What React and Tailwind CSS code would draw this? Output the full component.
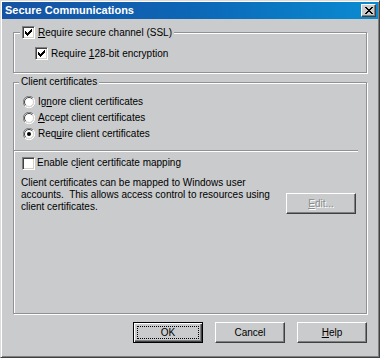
import React from "react";

const FACE = "bg-[#c9cbcc]";

const CheckBox = ({ checked }) => (
    <div className="w-[13px] h-[13px] shrink-0 bg-white border border-t-[#808080] border-l-[#808080] border-r-white border-b-white shadow-[inset_1px_1px_0_#404040,inset_-1px_-1px_0_#d4d0c8] flex items-center justify-center">
        {checked && (
            <svg width="7" height="7" viewBox="0 0 7 7" shapeRendering="crispEdges">
                <path
                    fill="#000"
                    d="M6 0h1v1h-1z M5 1h2v1h-2z M0 2h1v1h-1z M4 2h3v1h-3z M0 3h2v1h-2z M3 3h3v1h-3z M0 4h5v1h-5z M1 5h3v1h-3z M2 6h1v1h-1z"
                />
            </svg>
        )}
    </div>
);

const Radio = ({ checked }) => (
    <svg width="12" height="12" viewBox="0 0 12 12" className="shrink-0">
        <circle cx="6" cy="6" r="5" fill="#fff" />
        <path d="M1.9 10.1 A5.5 5.5 0 0 1 10.1 1.9" fill="none" stroke="#808080" strokeWidth="1" />
        <path d="M2.8 9.2 A4.5 4.5 0 0 1 9.2 2.8" fill="none" stroke="#404040" strokeWidth="1" />
        <path d="M10.1 1.9 A5.5 5.5 0 0 1 1.9 10.1" fill="none" stroke="#fff" strokeWidth="1" />
        <path d="M9.2 2.8 A4.5 4.5 0 0 1 2.8 9.2" fill="none" stroke="#d4d0c8" strokeWidth="1" />
        {checked && <circle cx="6" cy="6" r="2" fill="#000" />}
    </svg>
);

const Button = ({ children, isDefault, disabled }) => {
    if (isDefault) {
        return (
            <div className="w-[70px] h-[21px] border border-black shadow-[inset_1px_1px_0_#fff,inset_-1px_-1px_0_#404040,inset_-2px_-2px_0_#808080] p-[3px]">
                <div className="w-full h-full border border-dotted border-black flex items-center justify-center">
                    {children}
                </div>
            </div>
        );
    }
    return (
        <div
            className={`w-[70px] h-[21px] shrink-0 border border-t-white border-l-white border-r-[#404040] border-b-[#404040] shadow-[inset_-1px_-1px_0_#808080] flex items-center justify-center ${
                disabled ? "text-[#8a8c8e] [text-shadow:1px_1px_0_#fff]" : ""
            }`}
        >
            {children}
        </div>
    );
};

const GroupBox = ({ className, legend, legendClass, children }) => (
    <div className={`relative border border-[#8f9193] shadow-[inset_1px_1px_0_#fff,1px_1px_0_#fff] ${className}`}>
        <div className={`absolute ${FACE} px-[2px] ${legendClass}`}>{legend}</div>
        {children}
    </div>
);

export default function App() {
    return (
        <div className={`w-[380px] h-[358px] ${FACE} border border-t-[#dcdcdc] border-l-[#dcdcdc] border-r-[#404040] border-b-[#404040] shadow-[inset_1px_1px_0_#fff,inset_-1px_-1px_0_#808080] p-[1px] flex flex-col font-['Liberation_Sans',Arial,sans-serif] text-[10px] leading-[12px] text-black select-none`}>
            {/* title bar */}
            <div className="h-[17px] shrink-0 flex items-center bg-linear-to-r from-[#1652a2] via-[#0c66b6] to-[#0a8cd2] pl-[3px] pr-[2px]">
                <span className="flex-1 text-white font-bold text-[11px] leading-[13px]">Secure Communications</span>
                <div className="w-[15px] h-[13px] border border-t-white border-l-white border-r-[#404040] border-b-[#404040] shadow-[inset_-1px_-1px_0_#808080] bg-[#c9cbcc] flex items-center justify-center">
                    <svg width="8" height="7" viewBox="0 0 8 7" shapeRendering="crispEdges">
                        <path
                            fill="#000"
                            d="M0 0h2v1h-2z M6 0h2v1h-2z M1 1h2v1h-2z M5 1h2v1h-2z M2 2h4v1h-4z M3 3h2v1h-2z M2 4h4v1h-4z M1 5h2v1h-2z M5 5h2v1h-2z M0 6h2v1h-2z M6 6h2v1h-2z"
                        />
                    </svg>
                </div>
            </div>

            <div className="mx-[11px] mt-[13px]">
                <GroupBox
                    className="h-[41px]"
                    legendClass="left-[6px] top-[-7px] h-[13px] flex items-center gap-[3px]"
                    legend={
                        <>
                            <CheckBox checked />
                            <span>
                                <u>R</u>equire secure channel (SSL)
                            </span>
                        </>
                    }
                >
                    <div className="pt-[14px] pl-[21px] flex items-center gap-[3px]">
                        <CheckBox checked />
                        <span>
                            Require <u>1</u>28-bit encryption
                        </span>
                    </div>
                </GroupBox>

                <GroupBox
                    className="mt-[9px] h-[232px]"
                    legendClass="left-[5px] top-[-7px]"
                    legend="Client certificates"
                >
                    <div className="pt-[11px] pl-[9px]">
                        <div className="h-[16px] flex items-center gap-[3px]">
                            <Radio />
                            <span>
                                Ig<u>n</u>ore client certificates
                            </span>
                        </div>
                        <div className="h-[16px] flex items-center gap-[3px]">
                            <Radio />
                            <span>
                                <u>A</u>ccept client certificates
                            </span>
                        </div>
                        <div className="h-[16px] flex items-center gap-[3px]">
                            <Radio checked />
                            <span>
                                Req<u>u</u>ire client certificates
                            </span>
                        </div>
                    </div>

                    <div className="mt-[8px] mr-[8px] h-0 border-t border-t-[#8f9193] border-b border-b-white" />

                    <div className="mt-[3px] pl-[8px] h-[16px] flex items-center gap-[2px]">
                        <CheckBox />
                        <span>
                            Enable c<u>l</u>ient certificate mapping
                        </span>
                    </div>

                    <div className="mt-[6px] pl-[7px] pr-[10px] flex justify-between items-start">
                        <div className="whitespace-pre leading-[12px]">
                            {"Client certificates can be mapped to Windows user\naccounts.  This allows access control to resources using\nclient certificates."}
                        </div>
                        <div className="mt-[16px]">
                            <Button disabled>
                                <span>
                                    <u>E</u>dit...
                                </span>
                            </Button>
                        </div>
                    </div>
                </GroupBox>

                <div className="mt-[8px] flex justify-end gap-[12px] mr-[0px]">
                    <Button isDefault>OK</Button>
                    <Button>Cancel</Button>
                    <Button>
                        <span>
                            <u>H</u>elp
                        </span>
                    </Button>
                </div>
            </div>
        </div>
    );
}
